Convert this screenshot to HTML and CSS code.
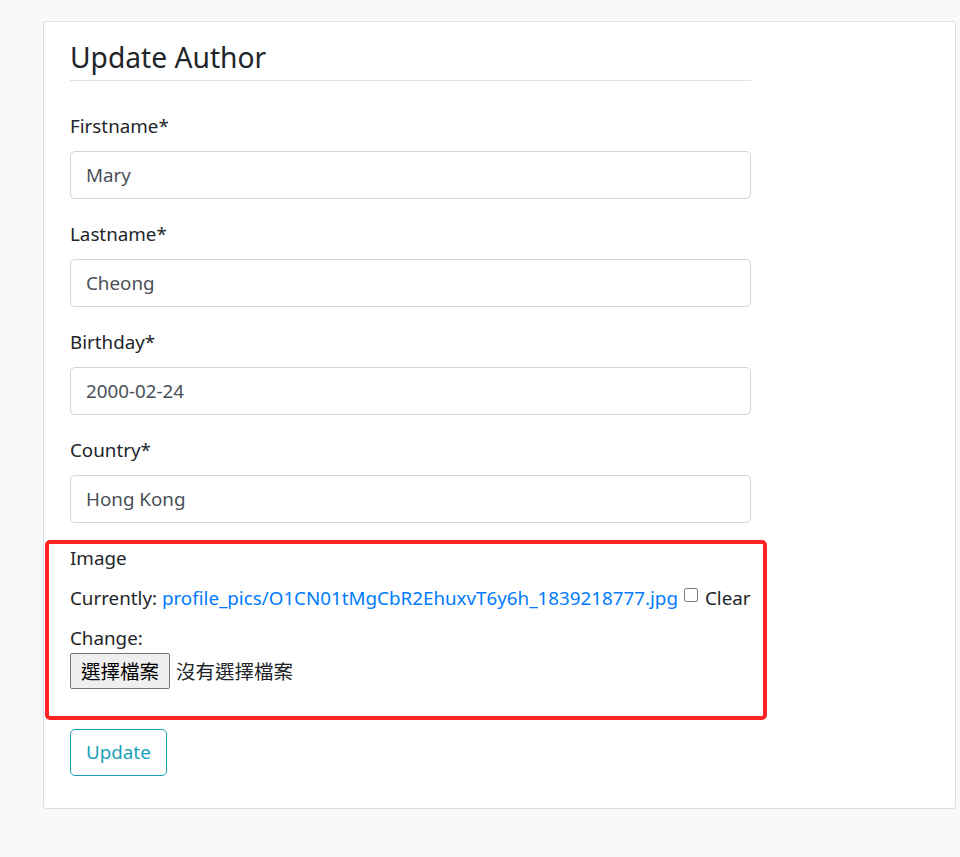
FILE: index.html
```html
<!DOCTYPE html>
<html lang="zh-Hant">
<head>
<meta charset="utf-8">
<title>Update Author</title>
<link rel="stylesheet" href="styles.css">
</head>
<body>
<main class="page">
  <div class="content-section">
    <form class="form">
      <fieldset class="fieldset">
        <legend class="legend">Update Author</legend>
        <div class="form-group">
          <label class="label">Firstname*</label>
          <input class="form-control" type="text" value="Mary">
        </div>
        <div class="form-group">
          <label class="label">Lastname*</label>
          <input class="form-control" type="text" value="Cheong">
        </div>
        <div class="form-group">
          <label class="label">Birthday*</label>
          <input class="form-control" type="text" value="2000-02-24">
        </div>
        <div class="form-group">
          <label class="label">Country*</label>
          <input class="form-control" type="text" value="Hong Kong">
        </div>
        <div class="form-group image-group">
          <label class="label">Image</label>
          <div class="file-widget">
            <div class="current-line">Currently: <a class="link" href="#">profile_pics/O1CN01tMgCbR2EhuxvT6y6h_1839218777.jpg</a><input class="clear-box" type="checkbox"><span class="clear-label">Clear</span></div>
            <div class="change-line">Change:</div>
            <div class="file-input"><span class="file-btn">選擇檔案</span><span class="file-none">沒有選擇檔案</span></div>
          </div>
        </div>
      </fieldset>
      <div class="form-group">
        <button class="btn-update" type="button">Update</button>
      </div>
    </form>
  </div>
</main>
<div class="annotation"></div>
</body>
</html>
```
FILE: styles.css
```css
html, body {
  margin: 0;
  padding: 0;
}
body {
  background: #f9f9f9;
  font-family: "Noto Sans", "Noto Sans CJK TC", sans-serif;
  font-size: 18.8px;
  line-height: 30px;
  color: #212529;
}
.page {
  padding: 21px 4px 0 43px;
}
.content-section {
  background: #ffffff;
  border: 1px solid #dddddd;
  border-radius: 3px;
  padding: 12.5px 25px;
  width: 861px;
  box-sizing: content-box;
}
.form {
  width: 681px;
  margin-left: 1px;
}
.fieldset {
  border: 0;
  margin: 0;
  padding: 0;
  min-width: 0;
}
.legend {
  display: block;
  width: 100%;
  padding: 0;
  font-size: 28.2px;
  line-height: 45px;
  font-weight: 400;
  color: #212529;
  border-bottom: 1px solid #dee2e6;
  margin-bottom: 30px;
}
.form-group {
  margin-bottom: 20px;
}
.label {
  display: inline-block;
  margin-bottom: 10px;
}
.form-control {
  display: block;
  width: 100%;
  box-sizing: border-box;
  height: 48px;
  padding: 7.5px 15px;
  font-family: inherit;
  font-size: 18.8px;
  line-height: 30px;
  color: #495057;
  background: #fff;
  border: 1px solid #ced4da;
  border-radius: 5px;
  margin: 0;
}
.file-widget {
  margin-bottom: 40px;
}
.image-group {
  margin-bottom: 0;
}
.current-line {
  height: 40px;
  white-space: nowrap;
}
.link {
  color: #007bff;
  text-decoration: none;
}
.clear-box {
  width: 14px;
  height: 14px;
  margin: 0 7px 0 6px;
  vertical-align: 3px;
}
.change-line {
  height: 30px;
}
.file-input {
  display: flex;
  align-items: center;
  height: 36px;
  font-family: "Noto Sans CJK TC", "Noto Sans", sans-serif;
}
.file-btn {
  display: inline-flex;
  align-items: center;
  justify-content: center;
  box-sizing: border-box;
  width: 100px;
  height: 36px;
  background: #efefef;
  border: 1px solid #767676;
  border-radius: 2px;
  color: #000;
  font-size: 19.5px;
  margin-right: 6px;
}
.file-none {
  font-size: 19.5px;
  color: #212529;
}
.btn-update {
  display: inline-block;
  font-family: inherit;
  font-size: 18.8px;
  line-height: 30px;
  padding: 7.5px 15px;
  color: #17a2b8;
  background: transparent;
  border: 1px solid #17a2b8;
  border-radius: 5px;
  margin: 0;
}
.annotation {
  position: absolute;
  left: 45px;
  top: 540px;
  width: 722px;
  height: 180px;
  box-sizing: border-box;
  border: 4px solid #ff2424;
  border-radius: 5px;
  pointer-events: none;
}
```
